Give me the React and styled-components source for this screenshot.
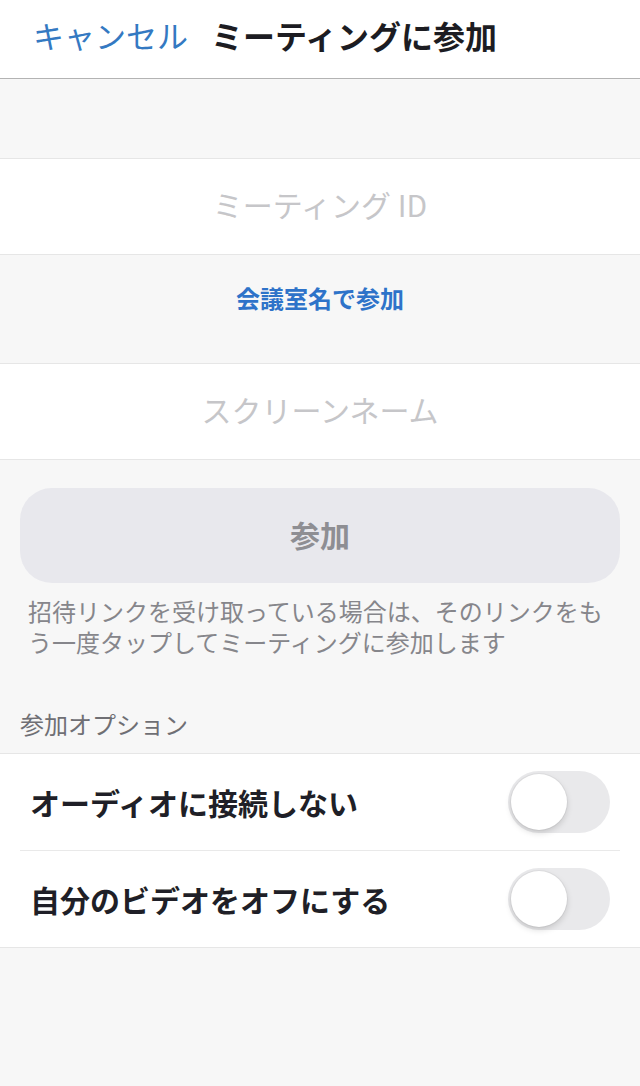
import React from "react";
import styled, { createGlobalStyle } from "styled-components";

const Global = createGlobalStyle`
  html, body { margin: 0; padding: 0; background: #f7f7f7; }
  body { font-family: "Noto Sans CJK JP", "Noto Sans", sans-serif; }
  * { box-sizing: border-box; }
`;

const Page = styled.div`
  width: 640px;
  min-height: 1086px;
  background: #f7f7f7;
  display: flex;
  flex-direction: column;
`;

const Header = styled.header`
  height: 79px;
  background: #fff;
  border-bottom: 1px solid #b3b3b3;
  display: flex;
  align-items: center;
  padding: 0 0 9px 33px;
  gap: 23px;
`;

const Cancel = styled.span`
  font-size: 31px;
  line-height: 1;
  color: #3479c2;
  font-weight: 400;
`;

const Title = styled.h1`
  margin: 0;
  font-size: 32px;
  line-height: 1;
  font-weight: 700;
  color: #1c1c22;
`;

const Spacer = styled.div`
  height: ${(p) => p.$h}px;
`;

const InputRow = styled.div`
  height: 97px;
  background: #fff;
  border-top: 1px solid #e6e6e6;
  border-bottom: 1px solid #e6e6e6;
  display: flex;
  align-items: center;
  justify-content: center;
`;

const Placeholder = styled.span`
  font-size: 30px;
  line-height: 1;
  color: #c6c6c9;
  padding-bottom: 6px;
`;

const LinkArea = styled.div`
  height: 108px;
  display: flex;
  align-items: center;
  justify-content: center;
`;

const LinkText = styled.span`
  font-size: 24px;
  line-height: 1;
  font-weight: 700;
  color: #2e73c9;
  padding-bottom: 22px;
`;

const JoinButton = styled.div`
  margin: 28px 20px 0;
  height: 95px;
  border-radius: 32px;
  background: #e8e8ed;
  display: flex;
  align-items: center;
  justify-content: center;
  font-size: 30px;
  font-weight: 700;
  color: #8e8e93;
  line-height: 1;
  padding-bottom: 4px;
`;

const Help = styled.p`
  margin: 0;
  padding: 12px 24px 0 28px;
  font-size: 24px;
  line-height: 31px;
  color: #86868b;
`;

const SectionLabel = styled.div`
  padding: 52px 0 0 20px;
  font-size: 24px;
  line-height: 30px;
  color: #6f6f74;
  height: 96px;
`;

const Options = styled.div`
  background: #fff;
  border-top: 1px solid #e6e6e6;
  border-bottom: 1px solid #e6e6e6;
  padding-left: 20px;
  padding-right: 20px;
`;

const OptionRow = styled.div`
  height: 96px;
  display: flex;
  align-items: center;
  justify-content: space-between;
  padding-left: 10px;
  padding-right: 10px;
  & + & {
    border-top: 1px solid #e9e9e9;
    height: 97px;
  }
`;

const OptionText = styled.span`
  font-size: 30px;
  line-height: 1;
  font-weight: 700;
  color: #1f1f27;
`;

const Toggle = styled.div`
  width: 102px;
  height: 62px;
  border-radius: 31px;
  background: #e9e9eb;
  position: relative;
  flex-shrink: 0;
`;

const Knob = styled.div`
  position: absolute;
  top: 3px;
  left: 3px;
  width: 56px;
  height: 56px;
  border-radius: 50%;
  background: #fff;
  box-shadow: 0 3px 6px rgba(0, 0, 0, 0.15), 0 0 0 1px rgba(0, 0, 0, 0.04);
`;

export default function App() {
  return (
    <Page>
      <Global />
      <Header>
        <Cancel>キャンセル</Cancel>
        <Title>ミーティングに参加</Title>
      </Header>
      <Spacer $h={79} />
      <InputRow>
        <Placeholder>ミーティング ID</Placeholder>
      </InputRow>
      <LinkArea>
        <LinkText>会議室名で参加</LinkText>
      </LinkArea>
      <InputRow>
        <Placeholder>スクリーンネーム</Placeholder>
      </InputRow>
      <JoinButton>参加</JoinButton>
      <Help>
        招待リンクを受け取っている場合は、そのリンクをもう一度タップしてミーティングに参加します
      </Help>
      <SectionLabel>参加オプション</SectionLabel>
      <Options>
        <OptionRow>
          <OptionText>オーディオに接続しない</OptionText>
          <Toggle>
            <Knob />
          </Toggle>
        </OptionRow>
        <OptionRow>
          <OptionText>自分のビデオをオフにする</OptionText>
          <Toggle>
            <Knob />
          </Toggle>
        </OptionRow>
      </Options>
    </Page>
  );
}
